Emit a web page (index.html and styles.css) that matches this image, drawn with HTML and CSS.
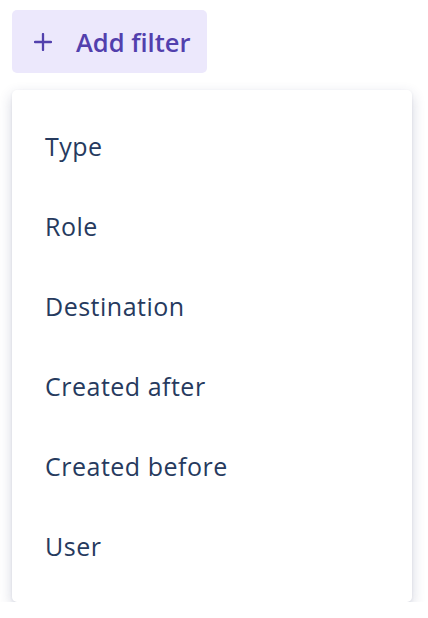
FILE: index.html
```html
<!DOCTYPE html>
<html>
<head>
<meta charset="utf-8">
<link rel="stylesheet" href="styles.css">
</head>
<body>
<div class="page">
  <button class="add-btn">
    <svg class="plus" width="18" height="18" viewBox="0 0 18 18"><path d="M9 1v16M1 9h16" stroke="currentColor" stroke-width="2.3" stroke-linecap="round" fill="none"/></svg>
    <span>Add filter</span>
  </button>
  <ul class="menu">
    <li class="item">Type</li>
    <li class="item">Role</li>
    <li class="item">Destination</li>
    <li class="item">Created after</li>
    <li class="item">Created before</li>
    <li class="item">User</li>
  </ul>
</div>
</body>
</html>
```
FILE: styles.css
```css
html, body {
  margin: 0;
  padding: 0;
  background: #ffffff;
}
.page {
  padding: 10px 16px 0 12px;
  font-family: "Open Sans", "Lato", sans-serif;
}
.add-btn {
  display: flex;
  align-items: center;
  gap: 24px;
  height: 63px;
  width: 195px;
  padding: 0 0 0 22px;
  border: none;
  border-radius: 5px;
  background: #ece8fc;
  color: #5240ad;
  font-family: "Open Sans", sans-serif;
  font-weight: 600;
  font-size: 25.5px;
  box-sizing: border-box;
}
.plus { flex: none; }
.menu {
  list-style: none;
  margin: 17px 0 0 0;
  padding: 16px 0;
  width: 400px;
  background: #fff;
  border-radius: 5px;
  box-shadow: 0 5px 14px rgba(40, 50, 100, 0.2), 0 1px 3px rgba(40,50,100,0.08);
}
.item {
  height: 80px;
  display: flex;
  align-items: center;
  padding-left: 33px;
  font-size: 25px;
  letter-spacing: 0.5px;
  color: #263a5e;
}
```
